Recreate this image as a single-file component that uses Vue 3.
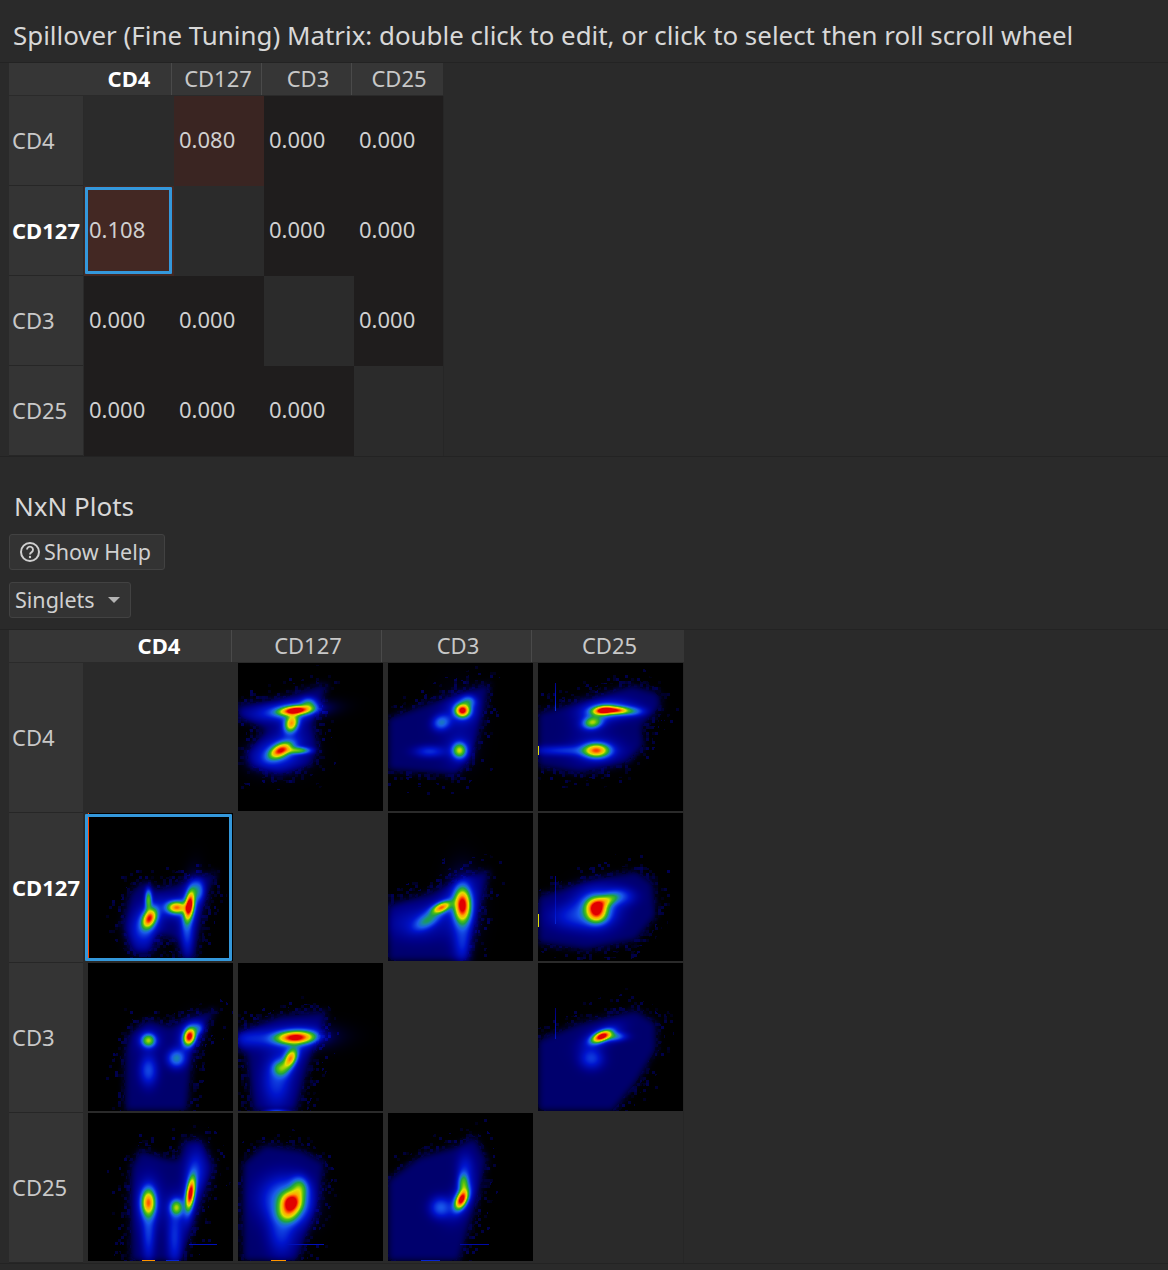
<script setup>
import { onMounted, ref } from 'vue'

const channels = ['CD4', 'CD127', 'CD3', 'CD25']
const selected = { row: 1, col: 0 }

const matrix = [
  [null, { t: '0.080', c: 'warm1' }, { t: '0.000' }, { t: '0.000' }],
  [{ t: '0.108', c: 'warm2' }, null, { t: '0.000' }, { t: '0.000' }],
  [{ t: '0.000' }, { t: '0.000' }, null, { t: '0.000' }],
  [{ t: '0.000' }, { t: '0.000' }, { t: '0.000' }, null]
]

// Density models: poly = population envelope, g = [cx, cy, sx, sy, rotDeg, amp]
const plots = {
  '0-1': { poly: [[0,42],[40,36],[90,20],[75,60],[80,87],[72,103],[42,112],[12,103],[8,90],[28,67],[0,53]],
    g: [[57,47,10,2.8,-5,1],[53,60,4,5.5,20,.68],[42,87,7.5,4,-28,.82],[60,87,8,2.3,0,.38],[70,40,5,4,0,.24],[40,92,18,11,0,.1],[45,48,26,6,-5,.09]] },
  '0-2': { poly: [[102,20],[42,40],[0,55],[0,107],[68,112],[82,97],[90,73]],
    g: [[74,47,4.5,4,0,.98],[80,38,5,4,0,.22],[53,59,6,5,-20,.24],[71,87,4.5,4.8,0,.5],[41,88,10,4,0,.14],[70,60,14,24,0,.03]] },
  '0-3': { poly: [[0,50],[54,35],[94,22],[121,30],[123,43],[104,63],[106,83],[88,100],[41,110],[0,103]],
    g: [[65,47,7,2.8,-5,.98],[79,47,7,2.3,0,.62],[54,59,6,3.8,-10,.46],[58,87,8,4.4,0,.76],[25,87,25,3.5,0,.13],[94,48,8,3,0,.18],[72,45,20,8,0,.06]],
    lines: [[17,20,47,.22]], spots: [[0,87,1,5,.62]] },
  '1-0': { poly: [[129,58],[115,97],[107,146],[94,146],[89,127],[69,120],[62,140],[45,140],[35,113],[42,80],[55,68],[70,77],[92,70]],
    g: [[61,105,4,6.5,25,.84],[60,86,2.3,7,0,.4],[88,94,6,3.8,0,.74],[101,92,2.9,9.5,8,1],[110,77,4,7,0,.22],[99,120,4,14,0,.12],[55,117,10,14,0,.1]],
    edge: .9 },
  '1-2': { poly: [[102,57],[82,130],[80,148],[0,148],[0,92],[42,80],[79,63]],
    g: [[74,92,5,10.5,0,.99],[53,94,6.5,3,-25,.72],[39,107,9,4.5,-30,.24],[74,130,6,14,0,.11],[29,110,20,11,0,.09]] },
  '1-3': { poly: [[0,83],[48,68],[98,58],[115,70],[118,103],[98,127],[48,137],[0,130]],
    g: [[58,94,6.5,6,0,.88],[68,87,8,3.8,-20,.34],[58,103,6.5,5,0,.36],[58,95,15,13,0,.12],[33,103,16,9,0,.11],[82,83,10,6,0,.14]],
    lines: [[17,63,110,.2]], spots: [[0,107,1,7,.62]] },
  '2-0': { poly: [[129,45],[105,87],[99,148],[37,148],[37,87],[42,70],[60,57],[82,63]],
    g: [[60,77,4.5,4.2,0,.48],[101,73,3.5,5.4,15,.99],[88,95,6,6,0,.27],[60,107,6,10,0,.18],[110,65,4,4,0,.16]] },
  '2-1': { poly: [[90,48],[75,87],[58,148],[15,148],[8,90],[0,87],[0,70],[42,53]],
    g: [[57,74,12,4,-2,.98],[52,95,3.6,6.5,25,.7],[42,105,5,5,0,.32],[38,117,10,18,0,.15],[10,75,15,6,0,.1],[38,148,8,1.5,0,.2]] },
  '2-3': { poly: [[0,77],[42,60],[98,47],[118,60],[118,87],[98,120],[75,148],[0,148]],
    g: [[63,73,6.5,3,-25,.98],[75,73,8,3,0,.24],[53,95,8,7,0,.16]],
    lines: [[17,45,75,.17]] },
  '3-0': { poly: [[43,148],[43,54],[52,37],[77,45],[90,47],[96,27],[114,27],[126,54],[110,97],[94,148]],
    g: [[60,89,4.4,8.5,0,.74],[102,80,2.6,10,8,.98],[88,94,4,5,0,.44],[60,120,4.5,20,0,.14],[86,124,5,20,0,.14],[108,57,8,14,0,.09]],
    hlines: [[101,128,131,.16]], spots: [[60,147,7,1,.8],[84,147,7,1,.2]] },
  '3-1': { poly: [[5,148],[5,50],[27,32],[63,37],[87,50],[79,94],[59,148]],
    g: [[53,89,6.5,6.5,0,.88],[61,75,5.5,7,0,.36],[49,100,6.5,6,0,.36],[52,90,14,15,0,.13],[43,120,9,15,0,.13],[39,84,16,16,0,.1]],
    hlines: [[42,85,131,.16]], spots: [[40,147,8,1,.8]] },
  '3-2': { poly: [[0,67],[31,44],[67,34],[87,24],[99,47],[87,94],[71,148],[0,148]],
    g: [[73,86,3.4,6.5,25,.98],[75,70,3.5,7,0,.38],[52,94,7,7,0,.2],[77,54,6,10,0,.1]],
    hlines: [[72,100,131,.14]], spots: [[42,147,10,1,.2]] }
}

const stops = [
  [0, 0, 0, 0], [.05, 0, 0, 70], [.1, 0, 0, 135], [.18, 0, 20, 205], [.27, 25, 90, 235],
  [.34, 25, 135, 170], [.4, 30, 160, 70], [.5, 80, 192, 16], [.62, 225, 225, 0],
  [.78, 255, 165, 0], [.9, 255, 70, 0], [1, 225, 0, 0]
]

function colour(v) {
  const x = Math.min(1, Math.max(0, v))
  for (let i = 1; i < stops.length; i++) {
    if (x <= stops[i][0]) {
      const a = stops[i - 1], b = stops[i]
      const t = (x - a[0]) / (b[0] - a[0])
      return [a[1] + (b[1] - a[1]) * t, a[2] + (b[2] - a[2]) * t, a[3] + (b[3] - a[3]) * t]
    }
  }
  return [225, 0, 0]
}

function maskOf(poly, W, H, blur) {
  const c = document.createElement('canvas')
  c.width = W
  c.height = H
  const x = c.getContext('2d', { willReadFrequently: true })
  x.filter = `blur(${blur}px)`
  x.fillStyle = '#fff'
  x.beginPath()
  poly.forEach(([u, v], i) => (i ? x.lineTo(u, v) : x.moveTo(u, v)))
  x.closePath()
  x.fill()
  return x.getImageData(0, 0, W, H).data
}

function draw(canvas, spec, seed) {
  const W = canvas.width, H = canvas.height
  const ctx = canvas.getContext('2d')
  const img = ctx.createImageData(W, H)
  const main = maskOf(spec.poly, W, H, 3.5)
  const haze = maskOf(spec.poly, W, H, 10)
  let s = seed * 7919 + 13
  const rnd = () => ((s = (s * 16807) % 2147483647) / 2147483647)
  const cols = Math.ceil(W / 3) + 1
  const rows = Math.ceil(H / 3) + 1
  const n1 = Array.from({ length: cols * rows }, rnd)
  const n2 = Array.from({ length: cols * rows }, rnd)
  const g = []
  for (const [cx, cy, sx, sy, r, a] of spec.g || []) {
    const t = (r * Math.PI) / 180
    const c = Math.cos(t), n = Math.sin(t)
    g.push({ cx, cy, sx, sy, a: a * 0.9, c, n })
    // each dense population sits in a wider pale halo
    if (a > 0.4) g.push({ cx, cy, sx: sx * 2.1, sy: sy * 2.1, a: a * 0.13, c, n })
  }
  for (let j = 0; j < H; j++) {
    for (let i = 0; i < W; i++) {
      const k = (j * W + i) * 4
      const cell = Math.floor(j / 3) * cols + Math.floor(i / 3)
      const m = main[k + 3] / 255, h = haze[k + 3] / 255
      let val = m * 0.08
      if (m < 0.55) val *= 0.6 + n2[cell] * 0.8
      if (m < 0.5 && n1[cell] < h * 1.2) val = Math.max(val, 0.015 + n2[cell] * 0.045)
      for (const q of g) {
        const dx = i - q.cx, dy = j - q.cy
        const a = (dx * q.c + dy * q.n) / q.sx
        const b = (-dx * q.n + dy * q.c) / q.sy
        val += q.a * Math.exp(-0.5 * (a * a + b * b))
      }
      for (const [x, y0, y1, l] of spec.lines || []) {
        if (x === i && j >= y0 && j <= y1) val = Math.max(val, l * (1 - ((y1 - j) / (y1 - y0)) * 0.5))
      }
      for (const [x0, x1, y, l] of spec.hlines || []) {
        if (y === j && i >= x0 && i <= x1) val = Math.max(val, l)
      }
      for (const [cx, cy, sx, sy, l] of spec.spots || []) {
        const a = (i - cx) / sx, b = (j - cy) / sy
        if (a * a + b * b < 1) val = Math.max(val, l)
      }
      if (spec.edge && i === 0) val = spec.edge
      const [r, gr, bl] = colour(val)
      img.data[k] = r
      img.data[k + 1] = gr
      img.data[k + 2] = bl
      img.data[k + 3] = 255
    }
  }
  ctx.putImageData(img, 0, 0)
}

const root = ref(null)
onMounted(() => {
  root.value.querySelectorAll('canvas[data-plot]').forEach((c, i) => {
    draw(c, plots[c.dataset.plot], i + 3)
  })
})
</script>

<template>
  <div ref="root" class="page">
    <h2 class="title">Spillover (Fine Tuning) Matrix: double click to edit, or click to select then roll scroll wheel</h2>

    <section class="table matrix">
      <div class="head">
        <div class="hc first" :class="{ on: selected.col === 0 }">{{ channels[0] }}</div>
        <div v-for="c in channels.slice(1)" :key="c" class="hc">{{ c }}</div>
      </div>
      <div v-for="(row, r) in matrix" :key="r" class="row">
        <div class="rh" :class="{ on: selected.row === r }">{{ channels[r] }}</div>
        <template v-for="(cell, c) in row" :key="c">
          <div v-if="cell" class="num" :class="[cell.c, { sel: selected.row === r && selected.col === c }]">{{ cell.t }}</div>
          <div v-else class="num blank"></div>
        </template>
      </div>
    </section>

    <h2 class="sub">NxN Plots</h2>
    <div class="controls">
      <button class="btn help" type="button">
        <svg width="22" height="22" viewBox="0 0 22 22" fill="none" stroke="#cfcfcf">
          <circle cx="11" cy="11" r="9" stroke-width="2" />
          <path d="M8 8.6a3 3 0 1 1 4.7 2.5c-1 .7-1.7 1.2-1.7 2.4" stroke-width="1.9" />
          <circle cx="11" cy="16" r="1.2" fill="#cfcfcf" stroke="none" />
        </svg>
        <span>Show Help</span>
      </button>
      <button class="btn pick" type="button">
        <span>Singlets</span>
        <i class="caret"></i>
      </button>
    </div>

    <section class="table nxn">
      <div class="head">
        <div class="hc first" :class="{ on: selected.col === 0 }">{{ channels[0] }}</div>
        <div v-for="c in channels.slice(1)" :key="c" class="hc">{{ c }}</div>
      </div>
      <div v-for="(name, r) in channels" :key="name" class="row">
        <div class="rh" :class="{ on: selected.row === r }">{{ name }}</div>
        <div v-for="(other, c) in channels" :key="other" class="plot" :class="{ sel: selected.row === r && selected.col === c }">
          <canvas v-if="r !== c" :data-plot="r + '-' + c" width="145" height="148"></canvas>
        </div>
      </div>
    </section>
  </div>
</template>

<style scoped>
.page {
  width: 1168px;
  height: 1270px;
  overflow: hidden;
  box-sizing: border-box;
  background: #2a2a2a;
  color: #d4d4d4;
  font-family: "Noto Sans", "Open Sans", sans-serif;
}
.title {
  margin: 0;
  height: 62px;
  padding: 17px 0 0 13px;
  box-sizing: border-box;
  font-size: 25.9px;
  line-height: 36px;
  font-weight: 400;
  white-space: nowrap;
  color: #d8d8d8;
}
.table {
  border-top: 1px solid #232323;
  border-bottom: 1px solid #232323;
  padding-left: 9px;
}
.head {
  display: flex;
  font-size: 22px;
  line-height: 30px;
}
.hc {
  background: #363636;
  border-right: 1px solid #4a4a4a;
  box-sizing: border-box;
  text-align: center;
  color: #c8c8c8;
  height: 32px;
  margin-bottom: 1px;
  padding-left: 3px;
}
.hc.on, .rh.on {
  font-weight: 700;
  color: #fff;
}
.row {
  display: flex;
}
.rh {
  width: 74px;
  flex: none;
  margin-right: 1px;
  box-sizing: border-box;
  padding: 0 0 2px 3px;
  display: flex;
  align-items: center;
  background: #343434;
  border-bottom: 1px solid #262626;
  font-size: 22px;
  color: #c8c8c8;
  white-space: nowrap;
}

/* matrix */
.matrix .hc { width: 90px; }
.matrix .hc.first { width: 163px; padding-left: 78px; }
.matrix .hc:last-child { width: 91px; border-right: 0; }
.matrix .row { height: 90px; }
.num {
  width: 90px;
  box-sizing: border-box;
  padding: 0 0 5px 5px;
  display: flex;
  align-items: center;
  font-size: 22px;
  color: #d0d0d0;
  background: #1f1d1d;
  position: relative;
}
.num:last-child { border-right: 1px solid #262626; }
.num.blank { background: #2b2b2b; }
.num.warm1 { background: #3a2522; }
.num.warm2 { background: #432823; }
.num.sel::after {
  content: "";
  position: absolute;
  left: 1px;
  top: 1px;
  width: 87px;
  height: 87px;
  box-sizing: border-box;
  border: 3px solid #3498db;
  border-radius: 1px;
}

/* controls */
.sub {
  margin: 0;
  padding: 31px 0 0 14px;
  font-size: 26px;
  line-height: 36px;
  font-weight: 400;
  color: #d8d8d8;
}
.controls {
  display: flex;
  flex-direction: column;
  align-items: flex-start;
  gap: 12px;
  padding: 10px 0 11px 9px;
}
.btn {
  height: 36px;
  box-sizing: border-box;
  display: inline-flex;
  align-items: center;
  background: #333333;
  border: 1px solid #424242;
  border-radius: 3px;
  color: #d0d0d0;
  font: 400 21.5px "Noto Sans", sans-serif;
  padding: 0 0 2px;
}
.help { width: 156px; padding-left: 9px; gap: 3px; }
.help svg { margin-top: 2px; }
.pick { width: 122px; padding-left: 5px; }
.caret {
  margin: 2px 0 0 13px;
  width: 0;
  height: 0;
  border-left: 6px solid transparent;
  border-right: 6px solid transparent;
  border-top: 6px solid #b4b4b4;
}

/* NxN */
.nxn .hc { width: 150px; }
.nxn .hc.first { width: 223px; padding-left: 78px; }
.nxn .hc:last-child { width: 152px; border-right: 0; }
.nxn .row { height: 150px; }
.plot {
  width: 150px;
  height: 150px;
  box-sizing: border-box;
  padding-left: 4px;
  background: #2a2a2a;
  position: relative;
}
.plot:last-child { border-right: 1px solid #262626; }
.plot canvas {
  display: block;
  width: 145px;
  height: 148px;
}
.plot.sel::after {
  content: "";
  position: absolute;
  left: 1px;
  top: 1px;
  width: 147px;
  height: 147px;
  box-sizing: border-box;
  border: 3px solid #3498db;
  border-radius: 1px;
}
</style>

<style>
html, body { background: #2a2a2a; }
</style>
